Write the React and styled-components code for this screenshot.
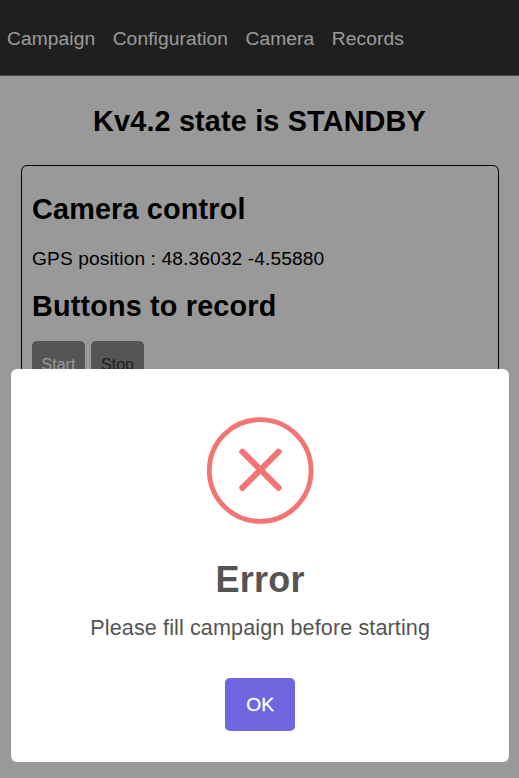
import React from "react";
import styled, { createGlobalStyle } from "styled-components";

const GlobalStyle = createGlobalStyle`
  *, *::before, *::after { box-sizing: border-box; }
  html, body { margin: 0; height: 100%; overflow: hidden; }
  body {
    background: #fff;
    color: #000;
    font-family: "Liberation Sans", Arial, sans-serif;
    font-size: 19.2px;
    letter-spacing: 0.1px;
  }
`;

const Page = styled.div`
  height: 778px;
  overflow: hidden;
`;

const NavBar = styled.nav`
  display: flex;
  align-items: center;
  gap: 17.4px;
  height: 76px;
  padding: 2px 7px 0;
  background: #343434;
  border-bottom: 1px solid #777;
`;

const NavLink = styled.a`
  color: #fff;
  line-height: 22px;
  text-decoration: none;
`;

const Heading = styled.h2`
  margin: ${(p) => p.$margin};
  font-size: 28.8px;
  line-height: 33px;
  letter-spacing: 0.17px;
  text-align: ${(p) => (p.$center ? "center" : "left")};
`;

const Card = styled.section`
  height: 480px;
  margin: 0 20.5px 0 21.4px;
  padding: 27px 9.6px;
  border: 1px solid #000;
  border-radius: 6px;
`;

const Position = styled.p`
  margin: 0;
  line-height: 22px;
`;

const ButtonRow = styled.div`
  display: flex;
  gap: 6px;
`;

const RecordButton = styled.button`
  width: 53px;
  height: 48px;
  padding: 0;
  border: 0;
  border-radius: 5px;
  background: #8e8e8e;
  color: ${(p) => (p.$disabledLook ? "#333" : "#fff")};
  font: 16px/48px "Liberation Sans", Arial, sans-serif;
`;

const Backdrop = styled.div`
  position: fixed;
  inset: 0;
  display: flex;
  align-items: flex-end;
  justify-content: center;
  padding: 0 10px 16px 11.4px;
  background: rgba(0, 0, 0, 0.4);
`;

const Dialog = styled.div`
  display: flex;
  flex-direction: column;
  align-items: center;
  width: 100%;
  height: 393px;
  padding-top: 48px;
  border-radius: 6px;
  background: #fff;
  color: #545454;
`;

const ErrorIcon = styled.svg`
  width: 107px;
  height: 107px;
  flex: none;
`;

const DialogTitle = styled.h2`
  margin: 35px 0 0;
  font-size: 36px;
  line-height: 41px;
  letter-spacing: 0.25px;
`;

const DialogText = styled.p`
  margin: 15px 0 0;
  font-size: 21.6px;
  line-height: 25px;
  letter-spacing: 0.1px;
`;

const ConfirmButton = styled.button`
  width: 70px;
  height: 53px;
  margin-top: 38px;
  padding: 0;
  border: 0;
  border-radius: 4.8px;
  background: #7066e0;
  color: #fff;
  font: 19.2px/53px "Liberation Sans", Arial, sans-serif;
  -webkit-text-stroke: 0.3px #fff;
`;

const links = ["Campaign", "Configuration", "Camera", "Records"];

export default function App() {
  return (
    <>
      <GlobalStyle />
      <Page>
        <NavBar>
          {links.map((label) => (
            <NavLink key={label}>{label}</NavLink>
          ))}
        </NavBar>
        <Heading $center $margin="29px 0 27px">Kv4.2 state is STANDBY</Heading>
        <Card>
          <Heading $margin="0 0 22px">Camera control</Heading>
          <Position>GPS position : 48.36032 -4.55880</Position>
          <Heading $margin="20px 0 17.5px">Buttons to record</Heading>
          <ButtonRow>
            <RecordButton>Start</RecordButton>
            <RecordButton $disabledLook>Stop</RecordButton>
          </ButtonRow>
        </Card>
      </Page>
      <Backdrop>
        <Dialog role="alertdialog">
          <ErrorIcon viewBox="0 0 106 106" fill="none" stroke="#f27474">
            <circle cx="52.7" cy="53" r="50.4" strokeWidth="4.8" />
            <g fill="#f27474" stroke="none">
              <rect x="24.8" y="49.3" width="56.4" height="6" rx="2.4" transform="rotate(45 53 52.3)" />
              <rect x="24.8" y="49.3" width="56.4" height="6" rx="2.4" transform="rotate(-45 53 52.3)" />
            </g>
          </ErrorIcon>
          <DialogTitle>Error</DialogTitle>
          <DialogText>Please fill campaign before starting</DialogText>
          <ConfirmButton>OK</ConfirmButton>
        </Dialog>
      </Backdrop>
    </>
  );
}
